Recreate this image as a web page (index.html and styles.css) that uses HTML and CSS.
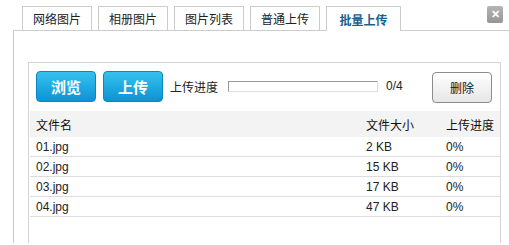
FILE: index.html
```html
<!DOCTYPE html>
<html lang="zh-CN">
<head>
    <meta charset="UTF-8" />
    <title>批量上传</title>
    <link rel="stylesheet" href="styles.css">
</head>
<body>
    <div class="dialog">
        <!-- ===== Pestañas ===== -->
        <div class="tabbar">
            <span class="tab">网络图片</span>
            <span class="tab">相册图片</span>
            <span class="tab">图片列表</span>
            <span class="tab">普通上传</span>
            <span class="tab tab-active">批量上传</span>
            <span class="close">&#x2715;</span>
        </div>

        <!-- ===== Contenido ===== -->
        <div class="content">
            <div class="panel">
                <div class="toolbar">
                    <button class="btn-blue">浏览</button>
                    <button class="btn-blue">上传</button>
                    <span class="label">上传进度</span>
                    <span class="progress"></span>
                    <span class="count">0/4</span>
                    <button class="btn-gray">删除</button>
                </div>

                <table class="files">
                    <thead>
                        <tr>
                            <th class="col-name">文件名</th>
                            <th class="col-size">文件大小</th>
                            <th>上传进度</th>
                        </tr>
                    </thead>
                    <tbody>
                        <tr><td>01.jpg</td><td>2 KB</td><td>0%</td></tr>
                        <tr><td>02.jpg</td><td>15 KB</td><td>0%</td></tr>
                        <tr><td>03.jpg</td><td>17 KB</td><td>0%</td></tr>
                        <tr><td>04.jpg</td><td>47 KB</td><td>0%</td></tr>
                    </tbody>
                </table>
            </div>
        </div>
    </div>
</body>
</html>
```

FILE: styles.css
```css
:root {
    --line: #cccccc;
    --row-line: #dddddd;
    --tab-active: #1a5f8e;
    --text-base: #222;
}

body {
    margin: 0;
    background: #fff;
    font-family: "Liberation Sans", "Noto Sans CJK SC", sans-serif;
    font-size: 12px;
    color: var(--text-base);
}

/* ====== Pestañas ====== */
.dialog {
    padding-top: 6px;
}
.tabbar {
    display: flex;
    align-items: flex-end;
    gap: 6px;
    margin-left: 13px;
    padding: 0 6px 0 9px;
    border-bottom: 1px solid var(--line);
}
.tab {
    display: flex;
    align-items: center;
    justify-content: center;
    width: 68px;
    height: 23px;
    border: 1px solid var(--line);
    border-bottom: none;
    background: #fff;
    font-family: "Noto Sans CJK SC", sans-serif;
    color: #222;
}
.tab-active {
    width: 73px;
    height: 24px;
    margin-bottom: -1px;
    font-weight: bold;
    color: var(--tab-active);
}
.close {
    margin-left: auto;
    align-self: flex-start;
    width: 16px;
    height: 17px;
    border-radius: 2px;
    background: linear-gradient(#b4b4b4, #969696);
    color: #fff;
    font-size: 11px;
    font-weight: bold;
    line-height: 17px;
    text-align: center;
}

/* ====== Contenido ====== */
.content {
    margin-left: 13px;
    border-left: 1px solid var(--line);
    padding: 31px 8px 0 14px;
    height: 181px;
}
.panel {
    border: 1px solid #d4d4d4;
    border-bottom: none;
    padding: 7px 0 0 0;
    height: 173px;
}

.toolbar {
    display: flex;
    align-items: center;
    padding: 0 8px 0 7px;
    height: 32px;
}
.btn-blue {
    width: 60px;
    height: 31px;
    margin-right: 7px;
    border: 1px solid #0b86c4;
    border-radius: 4px;
    background: linear-gradient(#35c2ee, #0d92d4);
    color: #fff;
    font-family: "Noto Sans CJK SC", sans-serif;
    font-size: 15px;
    font-weight: bold;
    padding: 0;
}
.label {
    font-family: "Noto Sans CJK SC", sans-serif;
    margin-right: 10px;
}
.progress {
    width: 148px;
    height: 9px;
    border: 1px solid #999;
    border-right-color: #ddd;
    border-bottom-color: #ddd;
    background: #fff;
}
.count {
    margin-left: 8px;
}
.btn-gray {
    margin-left: auto;
    margin-top: 2px;
    width: 60px;
    height: 31px;
    border: 1px solid #8c8c8c;
    border-radius: 4px;
    background: linear-gradient(#ffffff, #e6e6e6);
    color: #111;
    font-family: "Noto Sans CJK SC", sans-serif;
    font-size: 12px;
    padding: 0;
}

/* ====== Tabla ====== */
.files {
    width: calc(100% - 1px);
    margin: 9px 0 0 1px;
    border-collapse: collapse;
}
.files th {
    height: 26px;
    padding: 0 0 0 6px;
    background: #f3f3f3;
    text-align: left;
    font-weight: normal;
    font-family: "Noto Sans CJK SC", sans-serif;
    color: #111;
}
.files td {
    height: 19px;
    padding: 0 0 0 6px;
    border-bottom: 1px solid var(--row-line);
    color: #222;
}
.col-name { width: 324px; }
.col-size { width: 74px; }
```
